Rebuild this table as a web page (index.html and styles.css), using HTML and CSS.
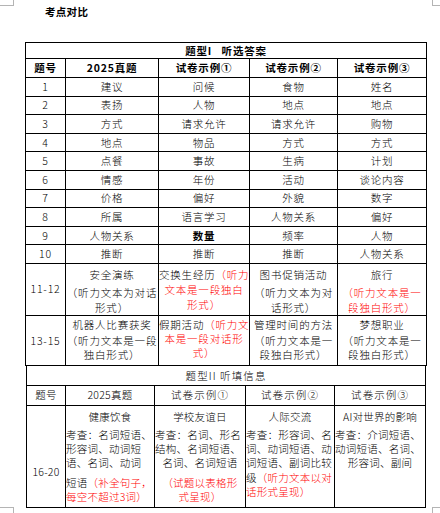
FILE: index.html
```html
<!DOCTYPE html>
<html lang="zh-CN">
<head>
<meta charset="utf-8">
<title>考点对比</title>
<link rel="stylesheet" href="styles.css">
</head>
<body>
<div class="page">
  <span class="mark mark-tl"></span>
  <span class="mark mark-tr"></span>
  <span class="mark mark-bl"></span>
  <span class="mark mark-br"></span>

  <h1 class="doc-title">考点对比</h1>

  <table class="grid t1">
    <colgroup>
      <col class="w40"><col class="w93"><col class="w91"><col class="w88"><col class="w89">
    </colgroup>
    <tr class="r-title"><th colspan="5" class="bold">题型I&nbsp;&nbsp;&nbsp;听选答案</th></tr>
    <tr class="r-head">
      <th class="bold">题号</th><th class="bold">2025真题</th><th class="bold">试卷示例①</th><th class="bold">试卷示例②</th><th class="bold">试卷示例③</th>
    </tr>
    <tr class="r-item"><td>1</td><td>建议</td><td>问候</td><td>食物</td><td>姓名</td></tr>
    <tr class="r-item"><td>2</td><td>表扬</td><td>人物</td><td>地点</td><td>地点</td></tr>
    <tr class="r-item"><td>3</td><td>方式</td><td>请求允许</td><td>请求允许</td><td>购物</td></tr>
    <tr class="r-item"><td>4</td><td>地点</td><td>物品</td><td>方式</td><td>方式</td></tr>
    <tr class="r-item"><td>5</td><td>点餐</td><td>事故</td><td>生病</td><td>计划</td></tr>
    <tr class="r-item"><td>6</td><td>情感</td><td>年份</td><td>活动</td><td>谈论内容</td></tr>
    <tr class="r-item"><td>7</td><td>价格</td><td>偏好</td><td>外貌</td><td>数字</td></tr>
    <tr class="r-item"><td>8</td><td>所属</td><td>语言学习</td><td>人物关系</td><td>偏好</td></tr>
    <tr class="r-item"><td>9</td><td>人物关系</td><td class="heavy">数量</td><td>频率</td><td>人物</td></tr>
    <tr class="r-item"><td>10</td><td>推断</td><td>推断</td><td>推断</td><td>人物关系</td></tr>
    <tr class="r-long1">
      <td>11-12</td>
      <td class="top">
        <div class="ln">安全演练</div>
        <div class="ln gap">（听力文本为对话</div>
        <div class="ln">形式）</div>
      </td>
      <td class="top">
        <div class="ln left">交换生经历<span class="red">（听力</span></div>
        <div class="ln red">文本是一段独白</div>
        <div class="ln red">形式）</div>
      </td>
      <td class="top">
        <div class="ln">图书促销活动</div>
        <div class="ln gap">（听力文本为对</div>
        <div class="ln">话形式）</div>
      </td>
      <td class="top">
        <div class="ln">旅行</div>
        <div class="ln gap red">（听力文本是一</div>
        <div class="ln red">段独白形式）</div>
      </td>
    </tr>
    <tr class="r-long2">
      <td>13-15</td>
      <td class="top">
        <div class="ln">机器人比赛获奖</div>
        <div class="ln gap">（听力文本是一段</div>
        <div class="ln">独白形式）</div>
      </td>
      <td class="top">
        <div class="ln left">假期活动<span class="red">（听力文</span></div>
        <div class="ln red">本是一段对话形</div>
        <div class="ln red">式）</div>
      </td>
      <td class="top">
        <div class="ln">管理时间的方法</div>
        <div class="ln gap">（听力文本是一</div>
        <div class="ln">段独白形式）</div>
      </td>
      <td class="top">
        <div class="ln">梦想职业</div>
        <div class="ln gap">（听力文本是一</div>
        <div class="ln">段独白形式）</div>
      </td>
    </tr>
  </table>

  <table class="grid t2">
    <colgroup>
      <col class="w39"><col class="w89"><col class="w91"><col class="w89"><col class="w91">
    </colgroup>
    <tr class="r-title2"><th colspan="5" class="spaced">题型II 听填信息</th></tr>
    <tr class="r-head2">
      <th>题号</th><th>2025真题</th><th class="spaced">试卷示例①</th><th class="spaced">试卷示例②</th><th class="spaced">试卷示例③</th>
    </tr>
    <tr class="r-fill">
      <td class="top num">16-20</td>
      <td class="top">
        <div class="ln">健康饮食</div>
        <div class="ln gap2 left">考查：名词短语、</div>
        <div class="ln left">形容词、动词短</div>
        <div class="ln left">语、名词、动词</div>
        <div class="ln gap3 left">短语<span class="red">（补全句子，</span></div>
        <div class="ln left red">每空不超过3词）</div>
      </td>
      <td class="top">
        <div class="ln">学校友谊日</div>
        <div class="ln gap2 left">考查：名词、形名</div>
        <div class="ln left">结构、名词短语、</div>
        <div class="ln">名词、名词短语</div>
        <div class="ln gap3 red">（试题以表格形</div>
        <div class="ln red">式呈现）</div>
      </td>
      <td class="top">
        <div class="ln">人际交流</div>
        <div class="ln gap2 left">考查：形容词、名</div>
        <div class="ln left">词、动词短语、动</div>
        <div class="ln left">词短语、副词比较</div>
        <div class="ln gap1 left">级<span class="red">（听力文本以对</span></div>
        <div class="ln left red">话形式呈现）</div>
      </td>
      <td class="top">
        <div class="ln">AI对世界的影响</div>
        <div class="ln gap2 left">考查：介词短语、</div>
        <div class="ln left">动词短语、名词、</div>
        <div class="ln">形容词、副间</div>
      </td>
    </tr>
  </table>
</div>
</body>
</html>
```

FILE: styles.css
```css
* {
  box-sizing: border-box;
  margin: 0;
  padding: 0;
}

html,
body {
  background: #fff;
}

body {
  width: 440px;
  height: 513px;
  overflow: hidden;
  font-family: "Noto Sans CJK SC", "Noto Sans", sans-serif;
  font-size: 10.5px;
  font-weight: 300;
  color: #000;
}

.page {
  position: relative;
  height: 513px;
}

/* page corner marks (Word layout crop marks) */
.mark {
  position: absolute;
  width: 14px;
  height: 6px;
  border-color: #b4b4b4;
  border-style: solid;
  border-width: 0;
}
.mark-tl { left: 0; top: 0; border-right-width: 1px; border-bottom-width: 1px; }
.mark-tr { right: 0; top: 0; width: 8px; border-left-width: 1px; border-bottom-width: 1px; }
.mark-bl { left: 0; bottom: 0; border-right-width: 1px; border-top-width: 1px; }
.mark-br { right: 0; bottom: 0; width: 8px; border-left-width: 1px; border-top-width: 1px; }

.doc-title {
  font-size: 10.5px;
  font-weight: 700;
  letter-spacing: 0.3px;
  line-height: 14px;
  padding: 5px 0 0 45px;
}

.grid {
  border-collapse: collapse;
  table-layout: fixed;
}

.grid th,
.grid td {
  border: 1px solid #000;
  padding: 0;
  text-align: center;
  vertical-align: middle;
  white-space: nowrap;
  font-weight: 300;
  line-height: 14px;
  overflow: visible;
}

.t1 {
  margin: 23px 0 0 25px;
  width: 401px;
  letter-spacing: 0.8px;
}

.t2 {
  margin: -1px 0 0 26px;
  width: 399px;
  letter-spacing: 0.25px;
}

.w39 { width: 39px; }
.w40 { width: 40px; }
.w88 { width: 88px; }
.w89 { width: 89px; }
.w91 { width: 91px; }
.w93 { width: 93px; }

.r-title { height: 16px; }
.r-head { height: 19px; }
.r-item { height: 18.6px; }
.r-long1 { height: 52px; }
.r-long2 { height: 50.5px; }
.r-title2 { height: 19.5px; }
.r-head2 { height: 20px; }
.r-fill { height: 102px; }

.grid .bold { font-weight: 700; }
.grid .heavy { font-weight: 700; }
.grid .spaced { letter-spacing: 1.1px; }

.grid td.top {
  vertical-align: top;
  padding-top: 3px;
}

.r-long1 .ln { line-height: 15px; }
.r-long1 .gap { margin-top: 3px; }
.r-long2 td.top { padding-top: 2.5px; }
.r-long2 .gap { margin-top: 2px; }

.r-fill td.top { padding-top: 4.5px; }
.r-fill td.num { padding-top: 59px; }
.gap1 { margin-top: 1px; }
.gap2 { margin-top: 3.5px; }
.gap3 { margin-top: 6px; }

.ln { display: block; }
.left { text-align: left; }
.red { color: #f00; }
```
